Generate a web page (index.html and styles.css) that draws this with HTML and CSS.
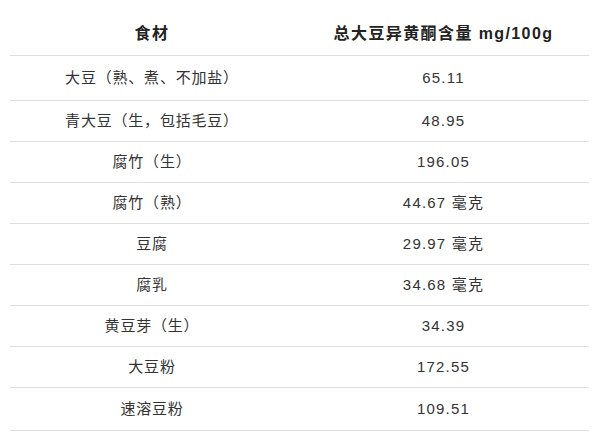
FILE: index.html
```html
<!DOCTYPE html>
<html lang="zh">
<head>
<meta charset="utf-8">
<link rel="stylesheet" href="styles.css">
</head>
<body>
<div class="table">
  <div class="row head">
    <div class="cell left">食材</div>
    <div class="cell right">总大豆异黄酮含量 mg/100g</div>
  </div>
  <div class="row first">
    <div class="cell left">大豆（熟、煮、不加盐）</div>
    <div class="cell right">65.11</div>
  </div>
  <div class="row">
    <div class="cell left">青大豆（生，包括毛豆）</div>
    <div class="cell right">48.95</div>
  </div>
  <div class="row">
    <div class="cell left">腐竹（生）</div>
    <div class="cell right">196.05</div>
  </div>
  <div class="row">
    <div class="cell left">腐竹（熟）</div>
    <div class="cell right">44.67 毫克</div>
  </div>
  <div class="row">
    <div class="cell left">豆腐</div>
    <div class="cell right">29.97 毫克</div>
  </div>
  <div class="row">
    <div class="cell left">腐乳</div>
    <div class="cell right">34.68 毫克</div>
  </div>
  <div class="row">
    <div class="cell left">黄豆芽（生）</div>
    <div class="cell right">34.39</div>
  </div>
  <div class="row">
    <div class="cell left">大豆粉</div>
    <div class="cell right">172.55</div>
  </div>
  <div class="row last">
    <div class="cell left">速溶豆粉</div>
    <div class="cell right">109.51</div>
  </div>
</div>
</body>
</html>
```

FILE: styles.css
```css
html, body {
  margin: 0;
  padding: 0;
  background: #ffffff;
}

body {
  font-family: "Liberation Sans", "Noto Sans CJK SC", sans-serif;
  font-size: 15px;
  letter-spacing: 1.2px;
  color: #333333;
}

.table {
  margin: 0 11px 0 10px;
  display: flex;
  flex-direction: column;
}

.row {
  display: grid;
  grid-template-columns: 284px 1fr;
  height: 41px;
  align-items: center;
  border-bottom: 1px solid #dedede;
  box-sizing: border-box;
}

.row.first {
  height: 45px;
}

.row.last {
  height: 43px;
}

.row.head {
  height: 56px;
  align-items: end;
  padding-bottom: 11px;
  font-size: 16px;
  letter-spacing: 1.4px;
  font-weight: bold;
  color: #222222;
}

.row .left {
  letter-spacing: 0.8px;
}

.row.head .left {
  letter-spacing: 1.4px;
}

.cell {
  text-align: center;
  line-height: 20px;
  white-space: nowrap;
}

.right {
  padding-left: 4px;
}
```
